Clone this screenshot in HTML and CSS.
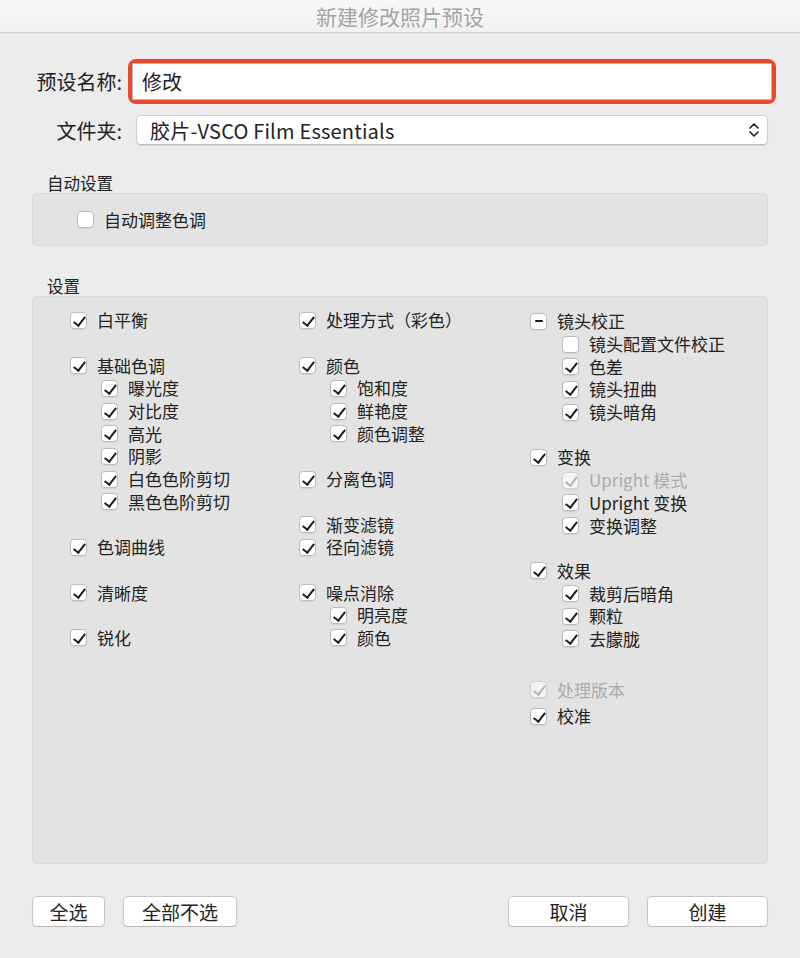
FILE: index.html
```html
<!DOCTYPE html>
<html lang="zh-CN">
<head>
    <meta charset="UTF-8">
    <meta name="viewport" content="width=device-width, initial-scale=1.0">
    <title>新建修改照片预设</title>
    <link rel="stylesheet" href="styles.css">
</head>
<body>
    <div class="titlebar">新建修改照片预设</div>

    <div class="dialog">
        <div class="form-row name-row">
            <label class="form-label" for="name">预设名称:</label>
            <div class="focus-ring">
                <input type="text" id="name" class="name-input" value="修改">
            </div>
        </div>

        <div class="form-row folder-row">
            <label class="form-label">文件夹:</label>
            <div class="select">
                <span>胶片-VSCO Film Essentials</span>
                <svg class="chevrons" width="12" height="18" viewBox="0 0 12 18">
                    <path d="M2 7 L6 3 L10 7" fill="none" stroke="#222" stroke-width="1.7" stroke-linecap="round" stroke-linejoin="round"/>
                    <path d="M2 11 L6 15 L10 11" fill="none" stroke="#222" stroke-width="1.7" stroke-linecap="round" stroke-linejoin="round"/>
                </svg>
            </div>
        </div>

        <div class="section-label auto-label">自动设置</div>
        <div class="box auto-box">
            <div class="item"><span class="cb"></span>自动调整色调</div>
        </div>

        <div class="section-label settings-label">设置</div>
        <div class="box settings-box">
            <div class="col">
                <div class="item"><span class="cb on"></span>白平衡</div>
                <div class="item gap"><span class="cb on"></span>基础色调</div>
                <div class="item sub"><span class="cb on"></span>曝光度</div>
                <div class="item sub"><span class="cb on"></span>对比度</div>
                <div class="item sub"><span class="cb on"></span>高光</div>
                <div class="item sub"><span class="cb on"></span>阴影</div>
                <div class="item sub"><span class="cb on"></span>白色色阶剪切</div>
                <div class="item sub"><span class="cb on"></span>黑色色阶剪切</div>
                <div class="item gap"><span class="cb on"></span>色调曲线</div>
                <div class="item gap"><span class="cb on"></span>清晰度</div>
                <div class="item gap"><span class="cb on"></span>锐化</div>
            </div>
            <div class="col">
                <div class="item"><span class="cb on"></span>处理方式（彩色）</div>
                <div class="item gap"><span class="cb on"></span>颜色</div>
                <div class="item sub"><span class="cb on"></span>饱和度</div>
                <div class="item sub"><span class="cb on"></span>鲜艳度</div>
                <div class="item sub"><span class="cb on"></span>颜色调整</div>
                <div class="item gap"><span class="cb on"></span>分离色调</div>
                <div class="item gap"><span class="cb on"></span>渐变滤镜</div>
                <div class="item"><span class="cb on"></span>径向滤镜</div>
                <div class="item gap"><span class="cb on"></span>噪点消除</div>
                <div class="item sub"><span class="cb on"></span>明亮度</div>
                <div class="item sub"><span class="cb on"></span>颜色</div>
            </div>
            <div class="col col-last">
                <div class="item"><span class="cb mixed"></span>镜头校正</div>
                <div class="item sub"><span class="cb"></span>镜头配置文件校正</div>
                <div class="item sub"><span class="cb on"></span>色差</div>
                <div class="item sub"><span class="cb on"></span>镜头扭曲</div>
                <div class="item sub"><span class="cb on"></span>镜头暗角</div>
                <div class="item gap"><span class="cb on"></span>变换</div>
                <div class="item sub disabled"><span class="cb on"></span>Upright 模式</div>
                <div class="item sub"><span class="cb on"></span>Upright 变换</div>
                <div class="item sub"><span class="cb on"></span>变换调整</div>
                <div class="item gap"><span class="cb on"></span>效果</div>
                <div class="item sub"><span class="cb on"></span>裁剪后暗角</div>
                <div class="item sub"><span class="cb on"></span>颗粒</div>
                <div class="item sub"><span class="cb on"></span>去朦胧</div>
                <div class="item version disabled"><span class="cb on"></span>处理版本</div>
                <div class="item calib"><span class="cb on"></span>校准</div>
            </div>
        </div>

        <div class="footer">
            <div class="btn-group">
                <button class="btn btn-all">全选</button>
                <button class="btn btn-none">全部不选</button>
            </div>
            <div class="btn-group">
                <button class="btn btn-wide">取消</button>
                <button class="btn btn-wide">创建</button>
            </div>
        </div>
    </div>
</body>
</html>
```

FILE: styles.css
```css
body {
    margin: 0;
    background: #ececec;
    font-family: "Noto Sans CJK SC", "Noto Sans", sans-serif;
    color: #222;
    --row: 22.7px;
}

.titlebar {
    height: 32px;
    line-height: 32px;
    text-align: center;
    font-size: 21px;
    color: #a4a4a4;
    background: linear-gradient(#f8f8f8, #f1f1f1);
    border-bottom: 1px solid #d3d3d3;
    box-shadow: 0 1px 0 #e6e6e6;
}

.dialog {
    padding: 0 32px 0 0;
}

.form-row {
    display: flex;
    align-items: center;
}

.form-label {
    width: 122px;
    text-align: right;
    font-size: 20px;
    flex: none;
}

.name-row {
    margin-top: 26px;
}

.focus-ring {
    margin-left: 6px;
    width: 648px;
    height: 45px;
    box-sizing: border-box;
    border: 4.5px solid #e9462c;
    border-radius: 8px;
    flex: none;
}

.name-input {
    display: block;
    width: 100%;
    height: 100%;
    box-sizing: border-box;
    margin: 0;
    border: 1px solid #b9b9b9;
    border-radius: 1px;
    background: #fff;
    padding: 0 0 0 9px;
    font-family: inherit;
    font-size: 20px;
    color: #222;
    outline: none;
}

.folder-row {
    margin-top: 11px;
}

.select {
    margin-left: 14px;
    width: 632px;
    height: 30px;
    box-sizing: border-box;
    border: 1px solid #cdcdcd;
    border-bottom-color: #bdbdbd;
    border-radius: 5px;
    background: #fff;
    box-shadow: 0 1px 1px rgba(0, 0, 0, 0.08);
    display: flex;
    align-items: center;
    justify-content: space-between;
    padding: 0 7px 0 13px;
    font-size: 20px;
    letter-spacing: 0.2px;
}

.section-label {
    padding-left: 47px;
    font-size: 16.5px;
    line-height: 20px;
}

.auto-label {
    margin-top: 28px;
}

.settings-label {
    margin-top: 30px;
}

.box {
    margin-left: 32px;
    width: 736px;
    box-sizing: border-box;
    background: #e3e3e3;
    border: 1px solid #dadada;
    border-radius: 5px;
}

.auto-box {
    height: 53px;
    display: flex;
    align-items: center;
    padding-left: 44px;
}

.settings-box {
    height: 568px;
    display: grid;
    grid-template-columns: 229px 231px 1fr;
    padding: 12px 0 0 37px;
}

.col {
    display: flex;
    flex-direction: column;
}

.col-last {
    padding-top: 1px;
}

.item {
    height: var(--row);
    display: flex;
    align-items: center;
    gap: 10px;
    font-size: 17px;
    line-height: 20px;
    white-space: nowrap;
}

.item.gap {
    margin-top: var(--row);
}

.item.sub {
    padding-left: 31px;
}

.col-last .item.sub {
    padding-left: 32px;
}

.item.version {
    margin-top: 28px;
}

.item.calib {
    margin-top: 4px;
}

.item.disabled {
    color: #acacac;
}

.cb {
    position: relative;
    width: 17px;
    height: 17px;
    box-sizing: border-box;
    border: 1px solid #bcbcbc;
    border-radius: 4px;
    background: #fff;
    box-shadow: 0 0.5px 1px rgba(0, 0, 0, 0.08);
    flex: none;
}

.cb.on::after {
    content: "";
    position: absolute;
    left: 5px;
    top: 1px;
    width: 4.5px;
    height: 10px;
    border: solid #1c1c1c;
    border-width: 0 2px 2px 0;
    transform: rotate(38deg);
}

.cb.mixed::after {
    content: "";
    position: absolute;
    left: 3.5px;
    top: 6px;
    width: 8px;
    height: 2.5px;
    border-radius: 1px;
    background: #1c1c1c;
}

.disabled .cb {
    border-color: #d2d2d2;
    background: #f3f3f3;
}

.disabled .cb.on::after {
    border-color: #b2b2b2;
}

.footer {
    margin-top: 32px;
    padding-left: 32px;
    display: flex;
    justify-content: space-between;
}

.btn-group {
    display: flex;
    gap: 18px;
}

.btn {
    height: 31px;
    box-sizing: border-box;
    margin: 0;
    padding: 0;
    border: 1px solid #c6c6c6;
    border-bottom-color: #b8b8b8;
    border-radius: 5px;
    background: #fff;
    box-shadow: 0 1px 1px rgba(0, 0, 0, 0.1);
    font-family: inherit;
    font-size: 19px;
    color: #222;
}

.btn-all {
    width: 73px;
}

.btn-none {
    width: 114px;
}

.btn-wide {
    width: 121px;
}
```
